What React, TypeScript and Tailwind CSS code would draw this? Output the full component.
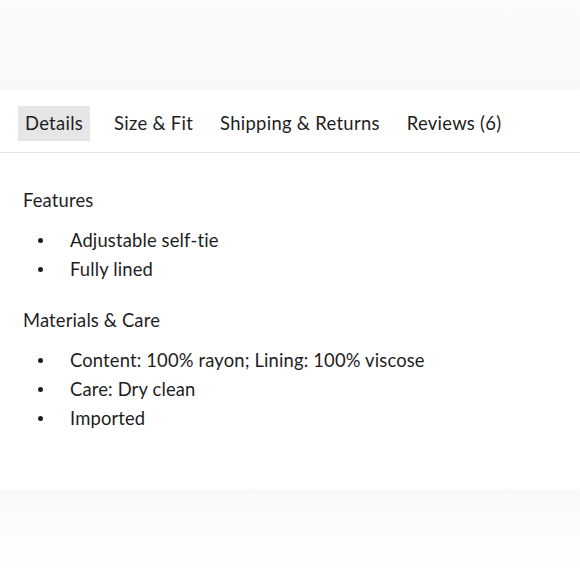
import React from 'react';

const tabs = ['Details', 'Size & Fit', 'Shipping & Returns', 'Reviews (6)'];

const sections = [
    { title: 'Features', items: ['Adjustable self-tie', 'Fully lined'] },
    {
        title: 'Materials & Care',
        items: ['Content: 100% rayon; Lining: 100% viscose', 'Care: Dry clean', 'Imported'],
    },
];

const App: React.FC = () => (
    <div
        className="w-[580px] h-[580px] bg-white text-[#1e1e1e] overflow-hidden"
        style={{ fontFamily: 'Lato, "Open Sans", sans-serif' }}
    >
        {/* faint blurred strip above the tabs */}
        <div className="h-[90px] bg-gradient-to-b from-[#fbfbfb] to-[#f8f8f8]" />

        <div className="flex items-center pt-4 pb-[11px] pl-[18px] gap-[13px] border-b border-[#e4e4e4] tracking-[0.3px]">
            {tabs.map((tab, i) => (
                <div
                    key={tab}
                    className={`h-[35px] px-[7px] flex items-center text-[18.4px] ${i === 0 ? 'bg-[#e6e6e6] mr-[4px]' : ''}`}
                >
                    {tab}
                </div>
            ))}
        </div>

        <div className="pl-[23px] pt-[33px] h-[336px] tracking-[0.15px]">
            {sections.map((s, i) => (
                <div key={s.title} className={i > 0 ? 'mt-[22px]' : ''}>
                    <h3 className="text-[18.4px] leading-[29px]">{s.title}</h3>
                    <ul className="mt-[11px]">
                        {s.items.map(item => (
                            <li key={item} className="flex items-center text-[18.4px] leading-[29px]">
                                <span className="w-[5px] h-[5px] rounded-full bg-[#1e1e1e] ml-[15px] mr-[27px]" />
                                {item}
                            </li>
                        ))}
                    </ul>
                </div>
            ))}
        </div>

        <div className="h-[90px] bg-gradient-to-b from-[#f9f9f9] via-[#fcfcfc] to-white" />
    </div>
);

export default App;
